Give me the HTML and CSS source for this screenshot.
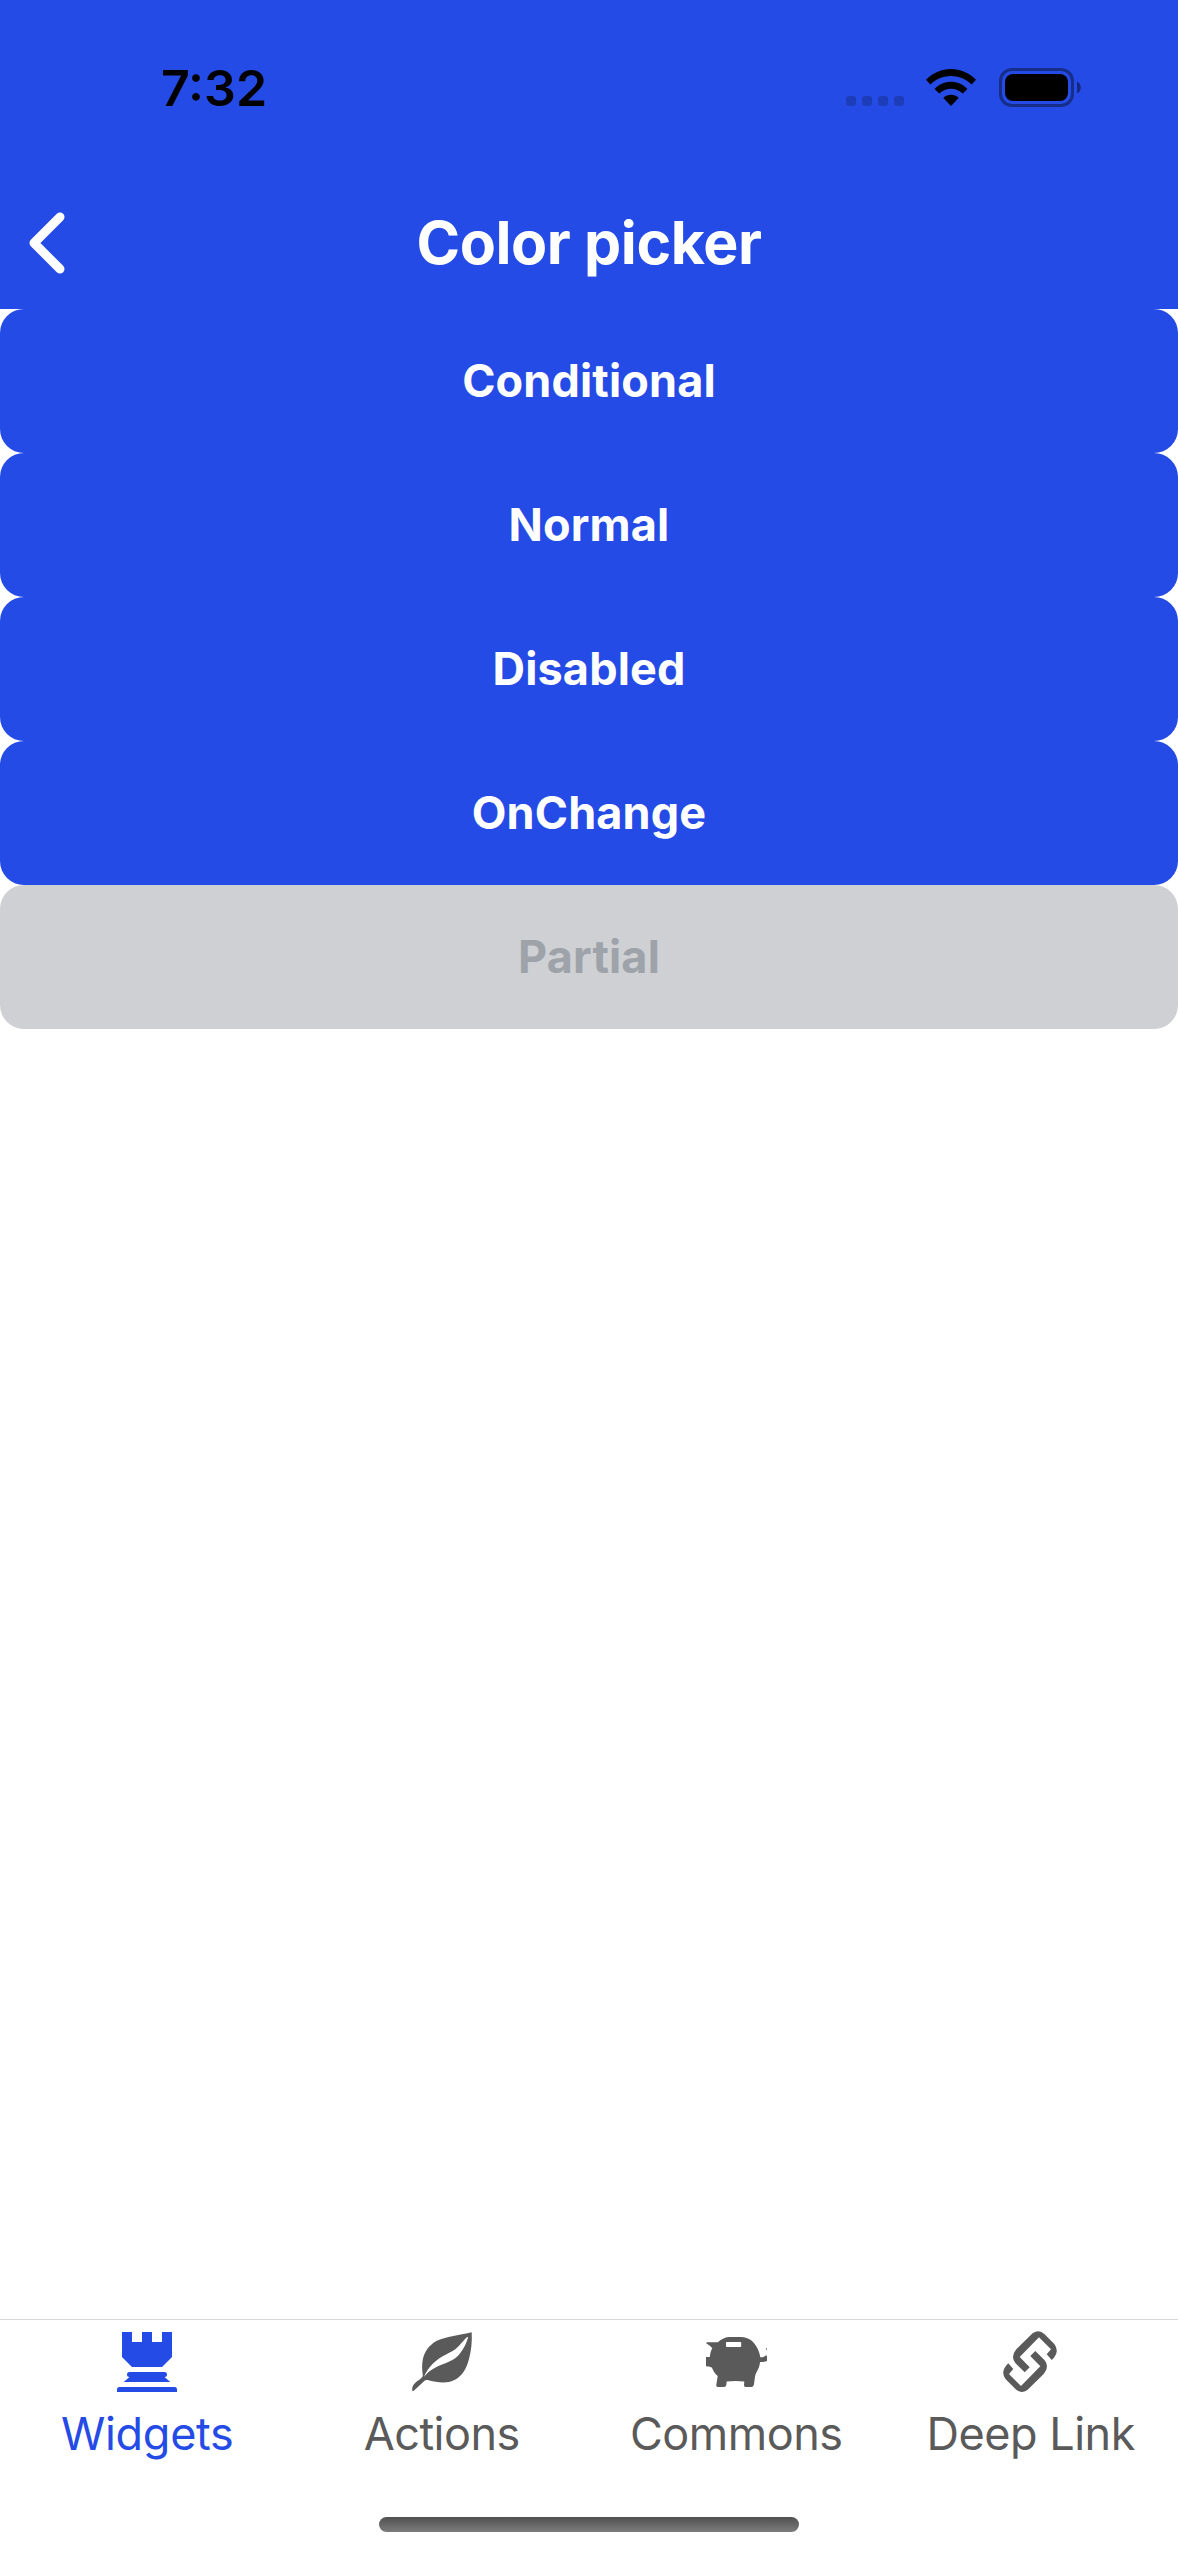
FILE: index.html
```html
<!DOCTYPE html>
<html lang="en">
<head>
<meta charset="utf-8">
<title>Color picker</title>
<link rel="stylesheet" href="styles.css">
</head>
<body>
<div class="screen">
  <header class="header">
    <div class="status">
      <span class="time">7:32</span>
      <div class="indicators">
        <div class="signal"><i></i><i></i><i></i><i></i></div>
        <svg class="wifi" viewBox="0 0 50 37" width="50" height="37">
          <path d="M0 10.8C14-3.6 36-3.6 50 10.8L45.600 15.400C34 4.200 16 4.200 4.400 15.400Z"/>
          <path d="M8.600 20C18 10.400 32 10.400 41.400 20L36.800 24.600C30 18.200 20 18.200 13.200 24.600Z"/>
          <path d="M17.400 29C21.500 24.600 28.500 24.600 32.600 29L25 37Z"/>
        </svg>
        <svg class="battery" viewBox="0 0 83 39" width="83" height="39">
          <rect x="1.5" y="1.5" width="72" height="36" rx="11.5" fill="none" stroke="#000" stroke-opacity=".4" stroke-width="3"/>
          <rect x="6" y="6" width="63" height="27" rx="8"/>
          <path d="M78 13.500C83 15.500 83 23.500 78 25.500Z" fill-opacity=".45"/>
        </svg>
      </div>
    </div>
    <nav class="navbar">
      <svg class="back" viewBox="0 0 36 62" width="36" height="62">
        <path d="M31 5L5 31L31 57" fill="none" stroke="#fff" stroke-width="9" stroke-linecap="round" stroke-linejoin="round"/>
      </svg>
      <h1 class="title">Color picker</h1>
    </nav>
  </header>
  <main class="content">
    <button class="btn">Conditional</button>
    <button class="btn">Normal</button>
    <button class="btn">Disabled</button>
    <button class="btn">OnChange</button>
    <button class="btn" disabled>Partial</button>
  </main>
  <footer class="footer">
    <div class="tabs">
      <a class="tab active">
        <svg viewBox="0 0 60 60" class="icon">
          <path d="M5 0H15V10H25V0H35V10H45V0H55V25L45 35H15L5 25Z"/>
          <path d="M12.500 40H47.500A2.500 2.500 0 0 1 47.500 45L53.300 50H6.700L12.500 45A2.500 2.500 0 0 1 12.500 40Z"/>
          <path d="M0 60V57.500Q0 55 2.500 55H57.500Q60 55 60 57.500V60Z"/>
        </svg>
        <span>Widgets</span>
      </a>
      <a class="tab">
        <svg viewBox="0 0 60 60" class="icon">
          <path fill-rule="evenodd" d="M59.700 .3C60.200 10 59.200 19 57 27C54.500 37 50 44 43 47.800C34 52.500 24 50 17.500 48.500C14.500 47.800 13.500 48 12 49.300L1.800 58.800Q.6 59.600 .2 58.500Q-.3 54 3.300 50.800C6 48.300 9 47 10.500 44.800Q10.900 44 10.700 42C9.800 36 9.800 28 12.500 22C16 14.500 21.500 9.500 29.500 7C39 4 48 3 59.700 .3ZM56.200 5C53.500 4.700 49.500 12.500 43 17.400C37 21.500 28.500 24 21.500 31C17.500 35 14 39.500 12 44.700C14.500 42.500 16 40.200 18.600 38.600C26 33 35.500 31.500 43.500 26C50 21 54.500 11.500 56.200 5Z"/>
        </svg>
        <span>Actions</span>
      </a>
      <a class="tab">
        <svg viewBox="0 0 60 60" class="icon">
          <path fill-rule="evenodd" d="M.5 10.300H12C15.500 7 19 5 25 5H35C43 5 48.500 10 51.500 16.500C53 19.800 53.900 22.500 54.300 25.300H56.500Q58.800 25 60 23.300L61 24V28.900Q57.500 30.200 54 30C53.500 36 50.500 40 49.500 42.500C48.500 46 48.600 50 47.800 53Q47.300 55 45.500 55H39.500Q38 55 38 53L38.300 49.500Q29.500 48.400 20.700 49.500L20.300 53Q19.800 55 18 55H11.800Q10 55 10.300 53L11.700 44C9 42 7.200 38.500 5.800 35.500Q3 34.300 0 34.300V25H3.800C4.200 21.500 5 18.500 6.300 16.300Q4.500 13.800 .5 11.500ZM20.700 10Q20 10 20 10.700V14.300Q20 15 20.700 15H34.500Q35.200 15 35.200 14.300V10.700Q35.200 10 34.500 10Z"/>
          <path d="M60 16.500L61 16V19Z"/>
        </svg>
        <span>Commons</span>
      </a>
      <a class="tab">
        <svg viewBox="0 0 60 60" class="icon">
          <path id="half" d="M50.700 28L53 25.700Q58.500 19 53.300 12L43.300 2Q38-3 31.600 1.300L15.300 17.300Q9.300 24.500 14.300 31L23.700 40.300L28.700 35.300L18.700 25L38 5.300L50 17.300L45.700 22.300Z"/>
          <use href="#half" transform="rotate(180 29 29.670)"/>
        </svg>
        <span>Deep Link</span>
      </a>
    </div>
    <div class="home-indicator"></div>
  </footer>
</div>
</body>
</html>
```
FILE: styles.css
```css
* { box-sizing: border-box; }

body {
  margin: 0;
  background: #fff;
  font-family: Inter, "Liberation Sans", sans-serif;
}

.screen {
  display: flex;
  flex-direction: column;
  width: 1178px;
  height: 2556px;
  overflow: hidden;
}

.header {
  height: 309px;
  background: #254be6;
}

.status {
  display: flex;
  justify-content: space-between;
  height: 177px;
  padding: 58px 96px 0 161px;
}

.time {
  color: #000;
  font-size: 50px;
  font-weight: 600;
  line-height: 60px;
}

.indicators {
  display: flex;
  align-items: flex-end;
  height: 49px;
}

.signal {
  display: flex;
  gap: 6px;
  margin: 0 22px 1px 0;
}

.signal i {
  width: 10px;
  height: 10px;
  border-radius: 3px;
  background: rgba(0, 0, 0, .2);
}

.wifi { margin: 0 23px 1px 0; }

.battery { flex: none; }

.navbar {
  display: grid;
  grid-template-columns: 100px 1fr 100px;
  align-items: center;
  height: 132px;
}

.back { margin-left: 29px; }

.title {
  margin: 0;
  color: #fff;
  font-size: 59px;
  font-weight: 700;
  line-height: 72px;
  letter-spacing: -.4px;
  text-align: center;
}

.content {
  display: flex;
  flex: 1;
  flex-direction: column;
}

.btn {
  height: 144px;
  padding: 0;
  border: 0;
  border-radius: 24px;
  background: #254be6;
  color: #fff;
  font: 700 45px/54px Inter, "Liberation Sans", sans-serif;
  letter-spacing: .15px;
}

.btn:disabled {
  background: #cfd0d4;
  color: #9ea3a9;
}

.footer {
  display: flex;
  flex-direction: column;
  align-items: center;
  justify-content: space-between;
  height: 237px;
  padding-bottom: 24px;
  border-top: 1px solid #d8d8d8;
}

.tabs {
  display: grid;
  grid-template-columns: repeat(4, 1fr);
  width: 100%;
  padding-top: 12px;
}

.tab {
  display: flex;
  flex-direction: column;
  align-items: center;
  gap: 15px;
  color: #5a5a5a;
  font-size: 45px;
  line-height: 54px;
  letter-spacing: -.5px;
}

.tab.active {
  color: #254be6;
  letter-spacing: -.3px;
}

.icon {
  width: 60px;
  height: 60px;
  fill: currentColor;
  overflow: visible;
}

.home-indicator {
  width: 420px;
  height: 15px;
  border-radius: 8px;
  background: linear-gradient(#505050, #7c7c7c);
}
```
